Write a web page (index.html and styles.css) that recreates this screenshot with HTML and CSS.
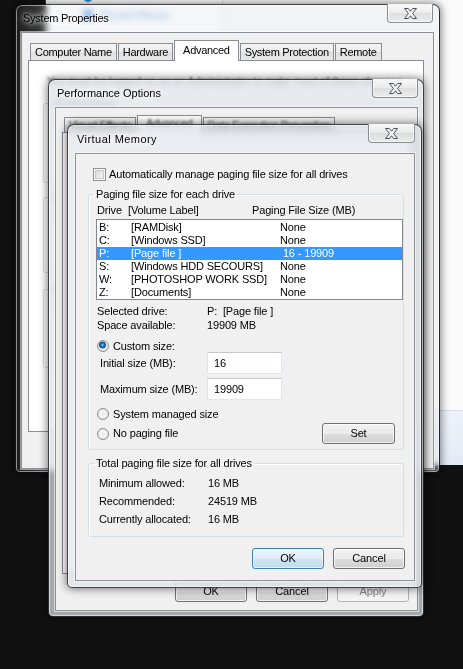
FILE: index.html
```html
<!DOCTYPE html>
<html lang="en">
<head>
<meta charset="utf-8">
<title>Virtual Memory</title>
<link rel="stylesheet" href="styles.css">
</head>
<body>
<div class="desk">

  <div class="explorer">
    <div class="exp-body">
      <div class="nav">
        <div class="nav-item"><span class="nav-icon"></span></div>
        <div class="nav-item"><span class="nav-icon"></span><span class="glassed">Recent Places</span></div>
      </div>
      <div class="exp-main"></div>
    </div>
    <div class="details"></div>
  </div>

  <section class="win sp">
    <div class="titlebar">
      <span class="title">System Properties</span>
      <span class="close"><svg width="13" height="11" viewBox="0 0 13 11"><polygon points="0.5,0.5 4.3,0.5 6.5,3.2 8.7,0.5 12.5,0.5 8.6,5.5 12.5,10.5 8.7,10.5 6.5,7.8 4.3,10.5 0.5,10.5 4.4,5.5" fill="#f4f4f4" stroke="#4b4f57" stroke-width="1" stroke-linejoin="round"/></svg></span>
    </div>
    <div class="client sp-client">
      <div class="tabs">
        <span class="tab">Computer Name</span>
        <span class="tab">Hardware</span>
        <span class="tab sel">Advanced</span>
        <span class="tab">System Protection</span>
        <span class="tab">Remote</span>
      </div>
      <div class="panel sp-panel">
        <p class="note glassed">You must be logged on as an Administrator to make most of these changes.</p>
        <fieldset class="sgroup g1"><legend class="glassed">Performance</legend><p>Visual effects, processor scheduling, memory usage, and virtual memory</p></fieldset>
        <fieldset class="sgroup g2"><legend>User Profiles</legend><p>Desktop settings related to your logon</p></fieldset>
        <fieldset class="sgroup g3"><legend>Startup and Recovery</legend><p>System startup, system failure, and debugging information</p></fieldset>
      </div>
    </div>
  </section>

  <section class="win po">
    <div class="titlebar">
      <span class="title">Performance Options</span>
      <span class="close"><svg width="13" height="11" viewBox="0 0 13 11"><polygon points="0.5,0.5 4.3,0.5 6.5,3.2 8.7,0.5 12.5,0.5 8.6,5.5 12.5,10.5 8.7,10.5 6.5,7.8 4.3,10.5 0.5,10.5 4.4,5.5" fill="#f4f4f4" stroke="#4b4f57" stroke-width="1" stroke-linejoin="round"/></svg></span>
    </div>
    <div class="client po-client">
      <div class="tabs small">
        <span class="tab"><span class="glassed">Visual Effects</span></span>
        <span class="tab sel"><span class="glassed">Advanced</span></span>
        <span class="tab"><span class="glassed">Data Execution Prevention</span></span>
      </div>
      <div class="panel po-panel"></div>
      <div class="po-buttons">
        <button class="btn">OK</button>
        <button class="btn">Cancel</button>
        <button class="btn off">Apply</button>
      </div>
    </div>
  </section>

  <section class="win vm">
    <div class="titlebar">
      <span class="title">Virtual Memory</span>
      <span class="close"><svg width="13" height="11" viewBox="0 0 13 11"><polygon points="0.5,0.5 4.3,0.5 6.5,3.2 8.7,0.5 12.5,0.5 8.6,5.5 12.5,10.5 8.7,10.5 6.5,7.8 4.3,10.5 0.5,10.5 4.4,5.5" fill="#f4f4f4" stroke="#4b4f57" stroke-width="1" stroke-linejoin="round"/></svg></span>
    </div>
    <div class="client vm-client">
      <div class="check-row"><span class="checkbox"></span><span>Automatically manage paging file size for all drives</span></div>

      <fieldset class="group grp-paging">
        <legend>Paging file size for each drive</legend>
        <div class="list-head"><span>Drive</span><span>[Volume Label]</span><span>Paging File Size (MB)</span></div>
        <div class="listbox">
          <div class="lrow"><span>B:</span><span>[RAMDisk]</span><span>None</span></div>
          <div class="lrow"><span>C:</span><span>[Windows SSD]</span><span>None</span></div>
          <div class="lrow sel"><span>P:</span><span>[Page file ]</span><span>&nbsp;16 - 19909</span></div>
          <div class="lrow"><span>S:</span><span>[Windows HDD SECOURS]</span><span>None</span></div>
          <div class="lrow"><span>W:</span><span>[PHOTOSHOP WORK SSD]</span><span>None</span></div>
          <div class="lrow"><span>Z:</span><span>[Documents]</span><span>None</span></div>
        </div>
        <div class="info"><span>Selected drive:</span><span>P:&nbsp; [Page file ]</span></div>
        <div class="info"><span>Space available:</span><span>19909 MB</span></div>
        <div class="opt custom"><span class="radio on"></span>Custom size:</div>
        <div class="field"><span class="lbl">Initial size (MB):</span><input class="txt" type="text" value="16" readonly></div>
        <div class="field"><span class="lbl">Maximum size (MB):</span><input class="txt" type="text" value="19909" readonly></div>
        <div class="opt sys"><span class="radio"></span>System managed size</div>
        <div class="opt nopage"><span class="radio"></span>No paging file<button class="btn set">Set</button></div>
      </fieldset>

      <fieldset class="group grp-total">
        <legend>Total paging file size for all drives</legend>
        <div class="trow"><span>Minimum allowed:</span><span>16 MB</span></div>
        <div class="trow"><span>Recommended:</span><span>24519 MB</span></div>
        <div class="trow"><span>Currently allocated:</span><span>16 MB</span></div>
      </fieldset>

      <div class="vm-buttons">
        <button class="btn def">OK</button>
        <button class="btn">Cancel</button>
      </div>
    </div>
  </section>

</div>
</body>
</html>
```
FILE: styles.css
```css
* { box-sizing: border-box; }
html, body { margin: 0; padding: 0; }
body {
  width: 463px; height: 669px; overflow: hidden;
  background: #111111;
  font-family: "Liberation Sans", Arial, sans-serif;
  font-size: 11px; line-height: 13px; letter-spacing: -0.15px; color: #000;
}
p { margin: 0; }
.desk { position: relative; width: 463px; height: 669px; overflow: hidden; }

/* text seen through an Aero glass frame */
.glassed { filter: blur(1.3px); opacity: .75; }

/* Explorer window behind */
.explorer {
  position: absolute; left: 45px; top: -12px; width: 430px; height: 477px;
  display: flex; flex-direction: column;
  background: #fafafa; border-left: 1px solid #3a3a3a;
}
.exp-body { flex: 1; display: flex; }
.nav { width: 177px; background: #fff; border-right: 1px solid #e3e3e3; padding-left: 37px; }
.nav-item { display: flex; align-items: center; gap: 7px; height: 18px; color: #3f7fd0; }
.nav-icon { width: 10px; height: 10px; border-radius: 50%; background: #2f8ae2; }
.exp-main { flex: 1; background: #fbfbfb; }
.details { height: 55px; background: linear-gradient(#eef2f9, #e4eaf5); border-top: 1px solid #d2dceb; }

/* Windows */
.win {
  position: absolute; display: flex; flex-direction: column;
  border: 1px solid rgba(0,0,0,.72); border-radius: 7px 7px 5px 5px;
  box-shadow: inset 0 0 0 1px rgba(255,255,255,.5), 0 0 9px 1px rgba(0,0,0,.5);
  backdrop-filter: blur(3px);
}
.sp {
  left: 15px; top: 4px; width: 425px; height: 469px; padding: 0 5px 3px 5px;
  background: linear-gradient(to right, rgba(40,40,40,.55) 0, rgba(90,90,90,.4) 18px, rgba(220,225,232,.3) 36px);
}
.po { left: 48px; top: 79px; width: 376px; height: 538px; padding: 0 5px 5px 6px; background: rgba(222,226,232,.72); }
.vm { left: 67px; top: 124px; width: 355px; height: 464px; padding: 0 6px 6px 7px; background: rgba(218,223,230,.6); }

.titlebar { flex: none; display: flex; align-items: flex-start; height: 27px; }
.vm .titlebar { height: 28px; }
.title {
  margin: 7px 0 0 2px; letter-spacing: 0; white-space: nowrap;
  text-shadow: 0 0 5px #fff, 0 0 9px rgba(255,255,255,.9);
}
.vm .title { margin-top: 8px; letter-spacing: 0.45px; }
.sp .title { letter-spacing: -0.25px; }
.close {
  margin: -1px 0 0 auto; width: 46px; height: 19px;
  display: flex; align-items: center; justify-content: center;
  border: 1px solid #8a8d92; border-top: none; border-radius: 0 0 4px 4px;
  background: linear-gradient(rgba(250,250,250,.88), rgba(234,234,234,.88) 50%, rgba(218,218,218,.88) 51%, rgba(236,236,236,.88));
  box-shadow: inset 0 0 0 1px rgba(255,255,255,.6);
}
.sp .close { margin-right: 1px; }
.vm .close { width: 47px; }

.client {
  flex: 1; min-height: 0; display: flex; flex-direction: column;
  background: #f0f0f0; border: 1px solid #8c8f94;
  box-shadow: 0 0 0 1px rgba(255,255,255,.55);
}
.sp-client { padding: 7px 9px 0 6px; }
.po-client { padding: 7px 6px 0 6px; }
.vm-client { padding: 14px 10px 0 12px; }

/* Tabs */
.tabs {
  flex: none; display: flex; align-items: flex-end; height: 21px;
  margin-bottom: -1px; padding-left: 2px; position: relative; z-index: 1;
}
.tab {
  height: 17px; margin-bottom: 1px; padding: 0 4px;
  border: 1px solid #898c95; border-bottom: none;
  background: linear-gradient(#f5f5f5, #ebebeb 50%, #dfdfdf 51%, #e8e8e8);
  line-height: 16px; letter-spacing: -0.3px; white-space: nowrap;
}
.tab + .tab { margin-left: 1px; }
.tab.sel { height: 21px; margin-bottom: 0; padding: 0 8px; background: #fff; line-height: 18px; }
.tabs.small { height: 18px; }
.small .tab { height: 15px; line-height: 14px; }
.small .tab.sel { height: 18px; line-height: 15px; }
.tab .glassed { display: inline-block; }

.panel { flex: none; background: #fff; border: 1px solid #898c95; }
.sp-panel { height: 372px; padding: 14px 0 0 14px; }
.po-panel { height: 442px; }

/* System Properties groups */
.note { margin-left: 4px; white-space: nowrap; }
.sgroup {
  margin: 0; padding: 0 8px; width: 367px; min-width: 0;
  border: 1px solid #d5dfe5; border-radius: 3px;
}
.sgroup legend { padding: 0 2px; }
.sgroup p { margin: 6px 0 0 4px; }
.g1 { margin-top: 9px; height: 86px; }
.g2 { margin-top: 8px; height: 82px; }
.g3 { margin-top: 10px; height: 85px; }

/* Buttons */
.btn {
  width: 72px; height: 21px; padding: 0;
  font: inherit; letter-spacing: inherit; color: #000; text-align: center;
  border: 1px solid #707070; border-radius: 3px;
  background: linear-gradient(#f2f2f2, #ebebeb 50%, #dddddd 51%, #cfcfcf);
  box-shadow: inset 0 0 0 1px rgba(255,255,255,.7);
}
.btn.def {
  border-color: #3c7fb1;
  background: linear-gradient(#ecf5fb, #dfedf7 50%, #cfe3f1 51%, #c3dbed);
  box-shadow: inset 0 0 0 1px rgba(255,255,255,.6);
}
.btn.off { border-color: #adb2b5; background: #f4f4f4; color: #838383; box-shadow: none; }
.btn.set { width: 73px; margin: 0 8px 0 auto; }
.po-buttons { flex: none; display: flex; justify-content: flex-end; gap: 9px; margin-top: 7px; padding-right: 2px; }
.vm-buttons { display: flex; justify-content: flex-end; gap: 9px; margin: 11px -1px 0 0; }

/* Virtual memory contents */
.check-row { display: flex; align-items: center; gap: 3px; height: 13px; margin-left: 5px; white-space: nowrap; }
.checkbox {
  flex: none; width: 13px; height: 13px; border: 1px solid #8e8f8f;
  background: linear-gradient(135deg, #d6d6d6, #f8f8f8);
  box-shadow: inset 0 0 0 1px #fbfbfb, inset 0 0 0 2px #c6c6c6;
}
.group {
  margin: 7px 0 0; padding: 0 0 5px 7px; min-width: 0;
  border: 1px solid #d5dfe5; border-radius: 3px;
  box-shadow: inset 1px 1px 0 #fff;
}
.group legend { padding: 0 2px; margin-left: -2px; }
.grp-total { padding: 0 0 8px 10px; }
.grp-total legend { margin-left: -5px; }

.list-head { display: grid; grid-template-columns: 31px 124px 1fr; margin-top: 3px; padding-left: 1px; white-space: nowrap; }
.listbox { margin-top: 2px; height: 81px; padding-top: 1px; background: #fff; border: 1px solid #828790; }
.lrow { display: grid; grid-template-columns: 32px 149px 1fr; height: 13px; padding-left: 2px; white-space: nowrap; }
.lrow.sel { background: #3399ff; color: #fff; }

.info { display: grid; grid-template-columns: 110px 1fr; line-height: 14px; padding-left: 1px; white-space: nowrap; }
.listbox + .info { margin-top: 4px; }

.opt { display: flex; align-items: center; height: 12px; padding-left: 1px; white-space: nowrap; }
.radio {
  flex: none; width: 12px; height: 12px; margin-right: 4px; border-radius: 50%;
  border: 1px solid #8e8f8f;
  background: radial-gradient(circle, #e6e6e6 0, #f6f6f6 3px, #d9d9d9 6px);
}
.radio.on {
  background: radial-gradient(circle at 45% 40%, #8ac8f0 0, #2a79c0 1.6px, #164d80 3.2px, #e7e7e7 3.8px, #f4f4f4 4.6px, #d8d8d8 6px);
}
.custom { margin-top: 8px; }
.sys { margin-top: 8px; }
.nopage { margin-top: 3px; height: 21px; }

.field { display: flex; align-items: center; height: 22px; padding-left: 4px; white-space: nowrap; }
.field + .field { margin-top: 4px; }
.lbl { width: 107px; flex: none; }
.txt {
  width: 75px; height: 22px; margin: 0; padding: 0 0 0 6px;
  font: inherit; letter-spacing: inherit; color: #000; background: #fff;
  border: 1px solid; border-color: #c5c9cf #e2e6ea #e2e6ea #e2e3ea; border-radius: 1px;
  outline: none;
}

.trow { display: grid; grid-template-columns: 109px 1fr; line-height: 18px; white-space: nowrap; }
.grp-total legend + .trow { margin-top: 4px; }
```
